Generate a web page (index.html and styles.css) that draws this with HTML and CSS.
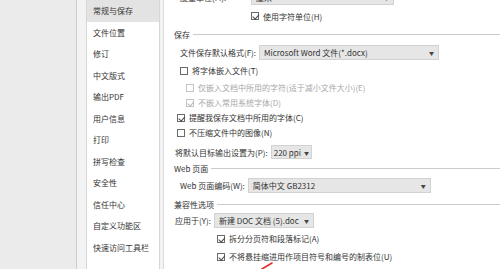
FILE: index.html
```html
<!DOCTYPE html>
<html lang="zh-CN">
<head>
    <meta charset="utf-8" />
    <title>Word 选项</title>
    <link rel="stylesheet" href="styles.css">
</head>
<body>
<div class="window">
    <div class="backdrop"></div>
    <div class="dialog">
        <ul class="nav">
            <li class="active">常规与保存</li>
            <li>文件位置</li>
            <li>修订</li>
            <li>中文版式</li>
            <li>输出PDF</li>
            <li>用户信息</li>
            <li>打印</li>
            <li>拼写检查</li>
            <li>安全性</li>
            <li>信任中心</li>
            <li>自定义功能区</li>
            <li>快速访问工具栏</li>
        </ul>
        <div class="panel">
            <div class="content">
                <div class="row row-top ind-1">
                    <span class="label label-unit">度量单位(M):</span>
                    <span class="select select-unit"><span>厘米</span><i>▼</i></span>
                </div>
                <div class="row row-check tall ind-unit">
                    <span class="box checked"></span><span>使用字符单位(H)</span>
                </div>

                <div class="heading h-save"><span>保存</span></div>
                <div class="row row-select ind-1">
                    <span class="label">文件保存默认格式(F):</span>
                    <span class="select select-format"><span>Microsoft Word 文件(*.docx)</span><i>▼</i></span>
                </div>
                <div class="row row-check ind-1 after-select">
                    <span class="box"></span><span>将字体嵌入文件(T)</span>
                </div>
                <div class="row row-check ind-sub sub-first disabled">
                    <span class="box"></span><span>仅嵌入文档中所用的字符(适于减小文件大小)(E)</span>
                </div>
                <div class="row row-check ind-sub disabled">
                    <span class="box checked"></span><span>不嵌入常用系统字体(D)</span>
                </div>
                <div class="row row-check ind-2">
                    <span class="box checked"></span><span>提醒我保存文档中所用的字体(C)</span>
                </div>
                <div class="row row-check ind-2">
                    <span class="box"></span><span>不压缩文件中的图像(N)</span>
                </div>
                <div class="row row-select row-ppi ind-0">
                    <span class="label">将默认目标输出设置为(P):</span>
                    <span class="select select-ppi"><span>220 ppi</span><i>▼</i></span>
                </div>

                <div class="heading"><span>Web 页面</span></div>
                <div class="row row-select ind-1">
                    <span class="label">Web 页面编码(W):</span>
                    <span class="select select-enc"><span>简体中文 GB2312</span><i>▼</i></span>
                </div>

                <div class="heading h-compat"><span>兼容性选项</span></div>
                <div class="row row-select ind-0">
                    <span class="label">应用于(Y):</span>
                    <span class="select select-doc"><span>新建 DOC 文档 (5).doc</span><i>▼</i></span>
                </div>
                <div class="row row-check tall ind-compat">
                    <span class="box checked"></span><span>拆分分页符和段落标记(A)</span>
                </div>
                <div class="row row-check tall ind-compat">
                    <span class="box checked"></span><span>不将悬挂缩进用作项目符号和编号的制表位(U)</span>
                </div>
            </div>
            <svg class="mark" width="20" height="10" viewBox="0 0 20 10">
                <path d="M2 9 L12 3" stroke="#e0302a" stroke-width="1.6" fill="none" stroke-linecap="round"/>
            </svg>
        </div>
    </div>
</div>
</body>
</html>
```

FILE: styles.css
```css
* {
    padding: 0;
    margin: 0;
    box-sizing: border-box;
}
body {
    width: 500px;
    height: 269px;
    overflow: hidden;
    background: #f0f0f0;
    font-family: "Noto Sans CJK SC", "Noto Sans", sans-serif;
    font-size: 8px;
    color: #333;
}
.window {
    display: flex;
    height: 269px;
}
.backdrop {
    width: 77px;
    background: #ebebeb;
    border-right: 1px solid #cdcdcd;
}
.dialog {
    flex: 1;
    display: flex;
    background: #f3f3f3;
    padding-left: 9px;
}
.nav {
    width: 74px;
    background: #fff;
    border-left: 1px solid #d6d6d6;
    border-right: 1px solid #d6d6d6;
    list-style: none;
}
.nav > li {
    height: 21.5px;
    line-height: 21.5px;
    padding-left: 6px;
    white-space: nowrap;
}
.nav > li.active {
    background: #e3e3e3;
}
.panel {
    position: relative;
    flex: 1;
    margin-left: 3px;
    background: #fff;
    border-left: 1px solid #dcdcdc;
    overflow: hidden;
}
.content {
    margin-top: -12px;
    padding-left: 10px;
}
.row {
    display: flex;
    align-items: center;
    white-space: nowrap;
}
.row-top {
    height: 19px;
}
.row-check {
    height: 15px;
}
.row-check.tall {
    height: 18px;
}
.row-select {
    height: 18px;
}
.after-select,
.sub-first {
    margin-top: 2px;
}
.row-ppi {
    margin-top: 3px;
}
.ind-0 { padding-left: 1px; }
.ind-1 { padding-left: 6px; }
.ind-2 { padding-left: 3px; }
.ind-sub { padding-left: 12px; }
.ind-compat { padding-left: 43px; }
.ind-unit { padding-left: 77px; }

.label {
    margin-right: 3px;
}
.label-unit {
    width: 68px;
}
.select {
    display: flex;
    align-items: center;
    justify-content: space-between;
    height: 15px;
    padding: 0 4px;
    background: #e6e6e6;
    border: 1px solid #d2d2d2;
}
.select > i {
    font-style: normal;
    font-size: 5px;
    color: #444;
}
.select-unit { width: 143px; }
.select-format { width: 180px; }
.select-ppi {
    height: 14px;
    padding: 0 2px;
    gap: 3px;
}
.select-enc { width: 183px; }
.select-doc { width: 100px; }

.box {
    width: 8px;
    height: 8px;
    margin-right: 4px;
    border: 1px solid #6a6a6a;
    background: #fff;
    position: relative;
}
.box.checked::after {
    content: "";
    position: absolute;
    left: 1.5px;
    top: 0px;
    width: 2.5px;
    height: 4.5px;
    border-right: 1px solid #444;
    border-bottom: 1px solid #444;
    transform: rotate(40deg);
}
.disabled {
    color: #a8a8a8;
}
.disabled .box {
    border-color: #c4c4c4;
}
.disabled .box.checked::after {
    border-color: #b8b8b8;
}

.heading {
    display: flex;
    align-items: center;
    height: 15px;
}
.heading.h-save {
    height: 18px;
}
.heading.h-compat {
    margin-top: 2.5px;
}
.heading::after {
    content: "";
    flex: 1;
    margin-left: 3px;
    border-top: 1px solid #cbcbcb;
}
.mark {
    position: absolute;
    left: 96px;
    top: 260px;
}
```
